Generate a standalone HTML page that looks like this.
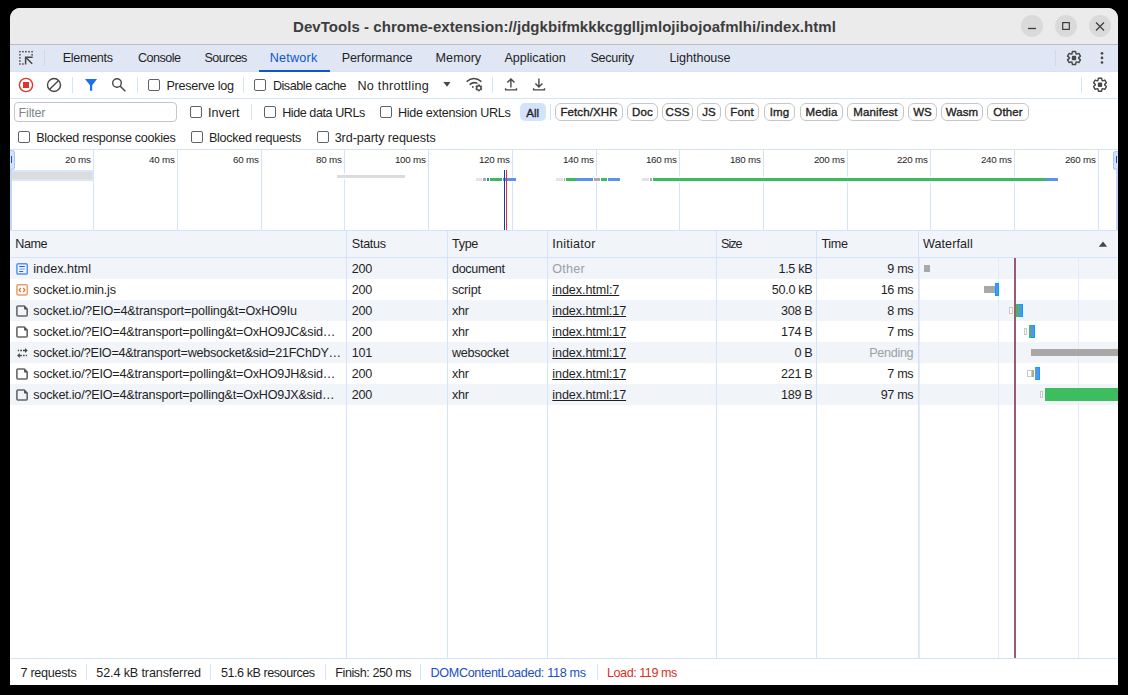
<!DOCTYPE html><html><head><meta charset="utf-8"><style>
html,body{margin:0;padding:0;background:#000;width:1128px;height:695px;overflow:hidden}
.t{position:absolute;white-space:nowrap;font-family:"Liberation Sans",sans-serif;color:#1f1f1f}
.r{position:absolute}
svg{position:absolute;overflow:visible}
#win{position:absolute;left:10px;top:8px;width:1108px;height:677px;background:#fff;border-radius:10px 10px 0 0;overflow:hidden}
</style></head><body>
<div id="win"></div>
<div class="r" style="left:10px;top:8px;width:1108px;height:36px;background:#ebebeb;border-radius:10px 10px 0 0;"></div>
<div class="r" style="left:10px;top:44px;width:1108px;height:1px;background:#bdbdbd;"></div>
<div class="t" style="left:293px;top:17.80px;font-size:15px;line-height:17px;color:#3d3d3d;font-weight:bold;letter-spacing:0.055px;">DevTools - chrome-extension://jdgkbifmkkkcgglljmlojibojoafmlhi/index.html</div>
<div class="r" style="left:1021px;top:15px;width:22px;height:22px;border-radius:11px;background:#dadada"></div>
<div class="r" style="left:1055px;top:15px;width:22px;height:22px;border-radius:11px;background:#dadada"></div>
<div class="r" style="left:1089px;top:15px;width:22px;height:22px;border-radius:11px;background:#dadada"></div>
<svg style="left:0;top:0" width="1128" height="60"><line x1="1028" y1="28.5" x2="1036" y2="28.5" stroke="#3d3d3d" stroke-width="1.3"/><rect x="1062.7" y="22.6" width="6.6" height="6.8" fill="none" stroke="#3d3d3d" stroke-width="1.2"/><path d="M1096 22.5 L1104 30.5 M1104 22.5 L1096 30.5" stroke="#3d3d3d" stroke-width="1.2"/></svg>
<div class="r" style="left:10px;top:45px;width:1108px;height:26px;background:#e0e6f4;"></div>
<div class="r" style="left:10px;top:71px;width:1108px;height:1px;background:#d3e3fd;"></div>
<div class="t" style="left:62.7px;top:50.90px;font-size:12.6px;line-height:15px;color:#1f1f1f;letter-spacing:-0.313px;">Elements</div>
<div class="t" style="left:137.9px;top:50.90px;font-size:12.6px;line-height:15px;color:#1f1f1f;letter-spacing:-0.514px;">Console</div>
<div class="t" style="left:204.5px;top:50.90px;font-size:12.6px;line-height:15px;color:#1f1f1f;letter-spacing:-0.554px;">Sources</div>
<div class="t" style="left:269.7px;top:50.90px;font-size:12.6px;line-height:15px;color:#0b57d0;letter-spacing:0.236px;">Network</div>
<div class="t" style="left:341.7px;top:50.90px;font-size:12.6px;line-height:15px;color:#1f1f1f;letter-spacing:-0.132px;">Performance</div>
<div class="t" style="left:435.6px;top:50.90px;font-size:12.6px;line-height:15px;color:#1f1f1f;letter-spacing:0.019px;">Memory</div>
<div class="t" style="left:504.5px;top:50.90px;font-size:12.6px;line-height:15px;color:#1f1f1f;letter-spacing:-0.037px;">Application</div>
<div class="t" style="left:590.4px;top:50.90px;font-size:12.6px;line-height:15px;color:#1f1f1f;letter-spacing:-0.271px;">Security</div>
<div class="t" style="left:669.4px;top:50.90px;font-size:12.6px;line-height:15px;color:#1f1f1f;letter-spacing:-0.054px;">Lighthouse</div>
<div class="r" style="left:259px;top:70px;width:71px;height:2px;background:#0b57d0;"></div>
<div class="r" style="left:44px;top:50px;width:1px;height:16px;background:#cdd9ef;"></div>
<div class="r" style="left:1055px;top:50px;width:1px;height:16px;background:#cdd9ef;"></div>
<div class="r" style="left:10px;top:98px;width:1108px;height:1px;background:#d3e3fd;"></div>
<svg style="left:0;top:0" width="1128" height="100"><circle cx="26" cy="85" r="6.6" fill="none" stroke="#dc362e" stroke-width="1.4"/><rect x="23" y="82" width="6" height="6" fill="#dc362e"/><circle cx="54" cy="85" r="6.5" fill="none" stroke="#474747" stroke-width="1.4"/><line x1="58.6" y1="80.4" x2="49.4" y2="89.6" stroke="#474747" stroke-width="1.4"/><path d="M85 79 H97 L92.2 85.3 V90.8 H90 V85.3 Z" fill="#1a6ef0"/><circle cx="117" cy="83" r="4.3" fill="none" stroke="#474747" stroke-width="1.4"/><line x1="120" y1="86" x2="125.3" y2="91.3" stroke="#474747" stroke-width="1.5"/><path d="M443.4 82 H450.5 L447 86.8 Z" fill="#474747"/><path d="M466.6 81.6 Q474 75.6 481.4 81.6" fill="none" stroke="#474747" stroke-width="1.5"/><path d="M469.6 84.6 Q474 81 478.4 84" fill="none" stroke="#474747" stroke-width="1.5"/><circle cx="472.8" cy="87" r="0.9" fill="#474747"/><circle cx="478.8" cy="87.9" r="4.6" fill="#fff"/><path d="M480.05 90.18 L479.79 91.36 L477.81 91.36 L477.55 90.18 L477.45 90.12 L476.30 90.49 L475.31 88.77 L476.20 87.96 L476.20 87.84 L475.31 87.03 L476.30 85.31 L477.45 85.68 L477.55 85.62 L477.81 84.44 L479.79 84.44 L480.05 85.62 L480.15 85.68 L481.30 85.31 L482.29 87.03 L481.40 87.84 L481.40 87.96 L482.29 88.77 L481.30 90.49 L480.15 90.12Z" fill="#474747"/><circle cx="478.8" cy="87.9" r="1.5" fill="#fff"/><path d="M510.9 87.6 V79.2 M507.3 82.6 L510.9 79 L514.5 82.6" fill="none" stroke="#474747" stroke-width="1.4"/><path d="M505.6 88.2 V89.9 H516.5 V88.2" fill="none" stroke="#474747" stroke-width="1.4" stroke-linejoin="round"/><path d="M538.9 78.5 V86.6 M535.4 83.6 L538.9 87 L542.4 83.6" fill="none" stroke="#474747" stroke-width="1.4"/><path d="M533.6 88.2 V89.9 H544.5 V88.2" fill="none" stroke="#474747" stroke-width="1.4" stroke-linejoin="round"/></svg>
<div class="r" style="left:72px;top:77px;width:1px;height:16px;background:#d3e3fd;"></div>
<div class="r" style="left:243px;top:77px;width:1px;height:16px;background:#d3e3fd;"></div>
<div class="r" style="left:492px;top:77px;width:1px;height:16px;background:#d3e3fd;"></div>
<div class="r" style="left:1081px;top:77px;width:1px;height:16px;background:#d3e3fd;"></div>
<div class="r" style="left:148px;top:79px;width:10px;height:10px;border:1.2px solid #5f6368;border-radius:2px;box-sizing:content-box"></div>
<div class="t" style="left:166.4px;top:79.00px;font-size:12.6px;line-height:15px;letter-spacing:-0.281px;">Preserve log</div>
<div class="r" style="left:254px;top:79px;width:10px;height:10px;border:1.2px solid #5f6368;border-radius:2px;box-sizing:content-box"></div>
<div class="t" style="left:272.9px;top:79.00px;font-size:12.6px;line-height:15px;letter-spacing:-0.46px;">Disable cache</div>
<div class="t" style="left:357.4px;top:79.00px;font-size:12.6px;line-height:15px;letter-spacing:0.291px;">No throttling</div>
<div class="r" style="left:14px;top:102px;width:161px;height:18px;border:1px solid #c4c7c5;border-radius:4px;box-sizing:content-box"></div>
<div class="t" style="left:18.6px;top:105.80px;font-size:12.6px;line-height:15px;color:#80868b;letter-spacing:-0.222px;">Filter</div>
<div class="r" style="left:190px;top:106px;width:10px;height:10px;border:1.2px solid #5f6368;border-radius:2px;box-sizing:content-box"></div>
<div class="t" style="left:208px;top:105.80px;font-size:12.6px;line-height:15px;">Invert</div>
<div class="r" style="left:251px;top:104px;width:1px;height:16px;background:#d3e3fd;"></div>
<div class="r" style="left:264px;top:106px;width:10px;height:10px;border:1.2px solid #5f6368;border-radius:2px;box-sizing:content-box"></div>
<div class="t" style="left:282.2px;top:105.80px;font-size:12.6px;line-height:15px;letter-spacing:-0.443px;">Hide data URLs</div>
<div class="r" style="left:380px;top:106px;width:10px;height:10px;border:1.2px solid #5f6368;border-radius:2px;box-sizing:content-box"></div>
<div class="t" style="left:397.9px;top:105.80px;font-size:12.6px;line-height:15px;letter-spacing:-0.297px;">Hide extension URLs</div>
<div class="r" style="left:520px;top:103px;width:26px;height:18px;background:#d3e3fd;border-radius:5px"></div>
<div class="t" style="left:526.3px;top:106.50px;font-size:11.5px;line-height:13px;color:#1f1f1f;-webkit-text-stroke:0.35px #1f1f1f;">All</div>
<div class="r" style="left:550px;top:104px;width:1px;height:16px;background:#d3e3fd;"></div>
<div class="r" style="left:555px;top:103px;width:66px;height:16px;border:1px solid #c4c7c5;border-radius:6px;box-sizing:content-box"></div>
<div class="t" style="left:555px;top:103px;width:68px;height:18px;line-height:18px;text-align:center;font-size:11.5px;-webkit-text-stroke:0.35px #1f1f1f;letter-spacing:0.1px">Fetch/XHR</div>
<div class="r" style="left:627px;top:103px;width:29px;height:16px;border:1px solid #c4c7c5;border-radius:6px;box-sizing:content-box"></div>
<div class="t" style="left:627px;top:103px;width:31px;height:18px;line-height:18px;text-align:center;font-size:11.5px;-webkit-text-stroke:0.35px #1f1f1f;letter-spacing:0.1px">Doc</div>
<div class="r" style="left:662px;top:103px;width:29px;height:16px;border:1px solid #c4c7c5;border-radius:6px;box-sizing:content-box"></div>
<div class="t" style="left:662px;top:103px;width:31px;height:18px;line-height:18px;text-align:center;font-size:11.5px;-webkit-text-stroke:0.35px #1f1f1f;letter-spacing:0.1px">CSS</div>
<div class="r" style="left:697px;top:103px;width:22px;height:16px;border:1px solid #c4c7c5;border-radius:6px;box-sizing:content-box"></div>
<div class="t" style="left:697px;top:103px;width:24px;height:18px;line-height:18px;text-align:center;font-size:11.5px;-webkit-text-stroke:0.35px #1f1f1f;letter-spacing:0.1px">JS</div>
<div class="r" style="left:725px;top:103px;width:32px;height:16px;border:1px solid #c4c7c5;border-radius:6px;box-sizing:content-box"></div>
<div class="t" style="left:725px;top:103px;width:34px;height:18px;line-height:18px;text-align:center;font-size:11.5px;-webkit-text-stroke:0.35px #1f1f1f;letter-spacing:0.1px">Font</div>
<div class="r" style="left:764px;top:103px;width:29px;height:16px;border:1px solid #c4c7c5;border-radius:6px;box-sizing:content-box"></div>
<div class="t" style="left:764px;top:103px;width:31px;height:18px;line-height:18px;text-align:center;font-size:11.5px;-webkit-text-stroke:0.35px #1f1f1f;letter-spacing:0.1px">Img</div>
<div class="r" style="left:800px;top:103px;width:41px;height:16px;border:1px solid #c4c7c5;border-radius:6px;box-sizing:content-box"></div>
<div class="t" style="left:800px;top:103px;width:43px;height:18px;line-height:18px;text-align:center;font-size:11.5px;-webkit-text-stroke:0.35px #1f1f1f;letter-spacing:0.1px">Media</div>
<div class="r" style="left:847px;top:103px;width:55px;height:16px;border:1px solid #c4c7c5;border-radius:6px;box-sizing:content-box"></div>
<div class="t" style="left:847px;top:103px;width:57px;height:18px;line-height:18px;text-align:center;font-size:11.5px;-webkit-text-stroke:0.35px #1f1f1f;letter-spacing:0.1px">Manifest</div>
<div class="r" style="left:908px;top:103px;width:27px;height:16px;border:1px solid #c4c7c5;border-radius:6px;box-sizing:content-box"></div>
<div class="t" style="left:908px;top:103px;width:29px;height:18px;line-height:18px;text-align:center;font-size:11.5px;-webkit-text-stroke:0.35px #1f1f1f;letter-spacing:0.1px">WS</div>
<div class="r" style="left:941px;top:103px;width:40px;height:16px;border:1px solid #c4c7c5;border-radius:6px;box-sizing:content-box"></div>
<div class="t" style="left:941px;top:103px;width:42px;height:18px;line-height:18px;text-align:center;font-size:11.5px;-webkit-text-stroke:0.35px #1f1f1f;letter-spacing:0.1px">Wasm</div>
<div class="r" style="left:987px;top:103px;width:40px;height:16px;border:1px solid #c4c7c5;border-radius:6px;box-sizing:content-box"></div>
<div class="t" style="left:987px;top:103px;width:42px;height:18px;line-height:18px;text-align:center;font-size:11.5px;-webkit-text-stroke:0.35px #1f1f1f;letter-spacing:0.1px">Other</div>
<div class="r" style="left:18px;top:131px;width:10px;height:10px;border:1.2px solid #5f6368;border-radius:2px;box-sizing:content-box"></div>
<div class="t" style="left:36.2px;top:130.60px;font-size:12.6px;line-height:15px;letter-spacing:-0.29px;">Blocked response cookies</div>
<div class="r" style="left:191px;top:131px;width:10px;height:10px;border:1.2px solid #5f6368;border-radius:2px;box-sizing:content-box"></div>
<div class="t" style="left:209px;top:130.60px;font-size:12.6px;line-height:15px;letter-spacing:-0.288px;">Blocked requests</div>
<div class="r" style="left:317px;top:131px;width:10px;height:10px;border:1.2px solid #5f6368;border-radius:2px;box-sizing:content-box"></div>
<div class="t" style="left:334.7px;top:130.60px;font-size:12.6px;line-height:15px;letter-spacing:-0.071px;">3rd-party requests</div>
<div class="r" style="left:10px;top:149px;width:1108px;height:1px;background:#d3e3fd;"></div>
<div class="r" style="left:10px;top:230px;width:1108px;height:1px;background:#d3e3fd;"></div>
<div class="r" style="left:93px;top:150px;width:1px;height:80px;background:#d3e3fd;"></div>
<div class="t" style="right:1037.1px;top:154.00px;font-size:9.8px;line-height:11px;letter-spacing:-0.22px;margin-right:0.22px;color:#1f1f1f;">20 ms</div>
<div class="r" style="left:177px;top:150px;width:1px;height:80px;background:#d3e3fd;"></div>
<div class="t" style="right:953.1px;top:154.00px;font-size:9.8px;line-height:11px;letter-spacing:-0.22px;margin-right:0.22px;color:#1f1f1f;">40 ms</div>
<div class="r" style="left:261px;top:150px;width:1px;height:80px;background:#d3e3fd;"></div>
<div class="t" style="right:869.1px;top:154.00px;font-size:9.8px;line-height:11px;letter-spacing:-0.22px;margin-right:0.22px;color:#1f1f1f;">60 ms</div>
<div class="r" style="left:344px;top:150px;width:1px;height:80px;background:#d3e3fd;"></div>
<div class="t" style="right:786.1px;top:154.00px;font-size:9.8px;line-height:11px;letter-spacing:-0.22px;margin-right:0.22px;color:#1f1f1f;">80 ms</div>
<div class="r" style="left:428px;top:150px;width:1px;height:80px;background:#d3e3fd;"></div>
<div class="t" style="right:702.1px;top:154.00px;font-size:9.8px;line-height:11px;letter-spacing:-0.22px;margin-right:0.22px;color:#1f1f1f;">100 ms</div>
<div class="r" style="left:512px;top:150px;width:1px;height:80px;background:#d3e3fd;"></div>
<div class="t" style="right:618.1px;top:154.00px;font-size:9.8px;line-height:11px;letter-spacing:-0.22px;margin-right:0.22px;color:#1f1f1f;">120 ms</div>
<div class="r" style="left:596px;top:150px;width:1px;height:80px;background:#d3e3fd;"></div>
<div class="t" style="right:534.1px;top:154.00px;font-size:9.8px;line-height:11px;letter-spacing:-0.22px;margin-right:0.22px;color:#1f1f1f;">140 ms</div>
<div class="r" style="left:679px;top:150px;width:1px;height:80px;background:#d3e3fd;"></div>
<div class="t" style="right:451.1px;top:154.00px;font-size:9.8px;line-height:11px;letter-spacing:-0.22px;margin-right:0.22px;color:#1f1f1f;">160 ms</div>
<div class="r" style="left:763px;top:150px;width:1px;height:80px;background:#d3e3fd;"></div>
<div class="t" style="right:367.1px;top:154.00px;font-size:9.8px;line-height:11px;letter-spacing:-0.22px;margin-right:0.22px;color:#1f1f1f;">180 ms</div>
<div class="r" style="left:847px;top:150px;width:1px;height:80px;background:#d3e3fd;"></div>
<div class="t" style="right:283.1px;top:154.00px;font-size:9.8px;line-height:11px;letter-spacing:-0.22px;margin-right:0.22px;color:#1f1f1f;">200 ms</div>
<div class="r" style="left:930px;top:150px;width:1px;height:80px;background:#d3e3fd;"></div>
<div class="t" style="right:200.10000000000002px;top:154.00px;font-size:9.8px;line-height:11px;letter-spacing:-0.22px;margin-right:0.22px;color:#1f1f1f;">220 ms</div>
<div class="r" style="left:1014px;top:150px;width:1px;height:80px;background:#d3e3fd;"></div>
<div class="t" style="right:116.10000000000002px;top:154.00px;font-size:9.8px;line-height:11px;letter-spacing:-0.22px;margin-right:0.22px;color:#1f1f1f;">240 ms</div>
<div class="r" style="left:1098px;top:150px;width:1px;height:80px;background:#d3e3fd;"></div>
<div class="t" style="right:32.09999999999991px;top:154.00px;font-size:9.8px;line-height:11px;letter-spacing:-0.22px;margin-right:0.22px;color:#1f1f1f;">260 ms</div>
<div class="r" style="left:10px;top:231px;width:1108px;height:26px;background:#f1f4f9;"></div>
<div class="r" style="left:10px;top:257px;width:1108px;height:1px;background:#d3e3fd;"></div>
<div class="r" style="left:10px;top:258px;width:1108px;height:21px;background:#f1f4f9;"></div>
<div class="r" style="left:10px;top:300px;width:1108px;height:21px;background:#f1f4f9;"></div>
<div class="r" style="left:10px;top:342px;width:1108px;height:21px;background:#f1f4f9;"></div>
<div class="r" style="left:10px;top:384px;width:1108px;height:21px;background:#f1f4f9;"></div>
<div class="r" style="left:346px;top:231px;width:1px;height:427px;background:#d3e3fd;"></div>
<div class="r" style="left:447px;top:231px;width:1px;height:427px;background:#d3e3fd;"></div>
<div class="r" style="left:547px;top:231px;width:1px;height:427px;background:#d3e3fd;"></div>
<div class="r" style="left:716px;top:231px;width:1px;height:427px;background:#d3e3fd;"></div>
<div class="r" style="left:816px;top:231px;width:1px;height:427px;background:#d3e3fd;"></div>
<div class="r" style="left:918px;top:231px;width:1px;height:427px;background:#d3e3fd;"></div>
<div class="r" style="left:998px;top:258px;width:1px;height:400px;background:#e3ebfa;"></div>
<div class="r" style="left:1078px;top:258px;width:1px;height:400px;background:#e3ebfa;"></div>
<div class="r" style="left:919px;top:258px;width:1px;height:400px;background:#e6ebf3;"></div>
<div class="t" style="left:15.2px;top:236.70px;font-size:12.6px;line-height:15px;letter-spacing:-0.4px;">Name</div>
<div class="t" style="left:351.8px;top:236.70px;font-size:12.6px;line-height:15px;letter-spacing:-0.284px;">Status</div>
<div class="t" style="left:452px;top:236.70px;font-size:12.6px;line-height:15px;letter-spacing:-0.325px;">Type</div>
<div class="t" style="left:552.3px;top:236.70px;font-size:12.6px;line-height:15px;letter-spacing:0.231px;">Initiator</div>
<div class="t" style="left:721px;top:236.70px;font-size:12.6px;line-height:15px;letter-spacing:-0.992px;">Size</div>
<div class="t" style="left:821.4px;top:236.70px;font-size:12.6px;line-height:15px;letter-spacing:-0.328px;">Time</div>
<div class="t" style="left:923px;top:236.70px;font-size:12.6px;line-height:15px;letter-spacing:0.059px;">Waterfall</div>
<div class="t" style="left:33.3px;top:261.80px;font-size:12.6px;line-height:15px;letter-spacing:0.027px;">index.html</div>
<div class="t" style="left:351.8px;top:261.80px;font-size:12.6px;line-height:15px;letter-spacing:-0.334px;">200</div>
<div class="t" style="left:452px;top:261.80px;font-size:12.6px;line-height:15px;letter-spacing:-0.329px;">document</div>
<div class="t" style="left:552.3px;top:261.80px;font-size:12.6px;line-height:15px;color:#9aa0a6;letter-spacing:0.2px;">Other</div>
<div class="t" style="right:315.29999999999995px;top:261.80px;font-size:12.6px;line-height:15px;letter-spacing:-0.284px;margin-right:0.284px;">1.5 kB</div>
<div class="t" style="right:214.39999999999998px;top:261.80px;font-size:12.6px;line-height:15px;letter-spacing:-0.325px;margin-right:0.325px;color:#1f1f1f;">9 ms</div>
<div class="t" style="left:33.3px;top:282.80px;font-size:12.6px;line-height:15px;letter-spacing:-0.226px;">socket.io.min.js</div>
<div class="t" style="left:351.8px;top:282.80px;font-size:12.6px;line-height:15px;letter-spacing:-0.334px;">200</div>
<div class="t" style="left:452px;top:282.80px;font-size:12.6px;line-height:15px;letter-spacing:-0.239px;">script</div>
<div class="t" style="left:552.3px;top:282.80px;font-size:12.6px;line-height:15px;letter-spacing:-0.08px;text-decoration:underline;">index.html:7</div>
<div class="t" style="right:315.29999999999995px;top:282.80px;font-size:12.6px;line-height:15px;letter-spacing:-0.291px;margin-right:0.291px;">50.0 kB</div>
<div class="t" style="right:214.39999999999998px;top:282.80px;font-size:12.6px;line-height:15px;letter-spacing:-0.327px;margin-right:0.327px;color:#1f1f1f;">16 ms</div>
<div class="t" style="left:33.3px;top:303.80px;font-size:12.6px;line-height:15px;letter-spacing:-0.142px;">socket.io/?EIO=4&amp;transport=polling&amp;t=OxHO9Iu</div>
<div class="t" style="left:351.8px;top:303.80px;font-size:12.6px;line-height:15px;letter-spacing:-0.334px;">200</div>
<div class="t" style="left:452px;top:303.80px;font-size:12.6px;line-height:15px;letter-spacing:-0.278px;">xhr</div>
<div class="t" style="left:552.3px;top:303.80px;font-size:12.6px;line-height:15px;letter-spacing:-0.085px;text-decoration:underline;">index.html:17</div>
<div class="t" style="right:315.29999999999995px;top:303.80px;font-size:12.6px;line-height:15px;letter-spacing:-0.314px;margin-right:0.314px;">308 B</div>
<div class="t" style="right:214.39999999999998px;top:303.80px;font-size:12.6px;line-height:15px;letter-spacing:-0.325px;margin-right:0.325px;color:#1f1f1f;">8 ms</div>
<div class="t" style="left:33.3px;top:324.80px;font-size:12.6px;line-height:15px;letter-spacing:-0.203px;">socket.io/?EIO=4&amp;transport=polling&amp;t=OxHO9JC&amp;sid…</div>
<div class="t" style="left:351.8px;top:324.80px;font-size:12.6px;line-height:15px;letter-spacing:-0.334px;">200</div>
<div class="t" style="left:452px;top:324.80px;font-size:12.6px;line-height:15px;letter-spacing:-0.278px;">xhr</div>
<div class="t" style="left:552.3px;top:324.80px;font-size:12.6px;line-height:15px;letter-spacing:-0.085px;text-decoration:underline;">index.html:17</div>
<div class="t" style="right:315.29999999999995px;top:324.80px;font-size:12.6px;line-height:15px;letter-spacing:-0.314px;margin-right:0.314px;">174 B</div>
<div class="t" style="right:214.39999999999998px;top:324.80px;font-size:12.6px;line-height:15px;letter-spacing:-0.325px;margin-right:0.325px;color:#1f1f1f;">7 ms</div>
<div class="t" style="left:33.3px;top:345.80px;font-size:12.6px;line-height:15px;letter-spacing:-0.272px;">socket.io/?EIO=4&amp;transport=websocket&amp;sid=21FChDY…</div>
<div class="t" style="left:351.8px;top:345.80px;font-size:12.6px;line-height:15px;letter-spacing:-0.334px;">101</div>
<div class="t" style="left:452px;top:345.80px;font-size:12.6px;line-height:15px;letter-spacing:-0.315px;">websocket</div>
<div class="t" style="left:552.3px;top:345.80px;font-size:12.6px;line-height:15px;letter-spacing:-0.085px;text-decoration:underline;">index.html:17</div>
<div class="t" style="right:315.29999999999995px;top:345.80px;font-size:12.6px;line-height:15px;letter-spacing:-0.3px;margin-right:0.3px;">0 B</div>
<div class="t" style="right:214.39999999999998px;top:345.80px;font-size:12.6px;line-height:15px;letter-spacing:-0.315px;margin-right:0.315px;color:#9aa0a6;">Pending</div>
<div class="t" style="left:33.3px;top:366.80px;font-size:12.6px;line-height:15px;letter-spacing:-0.203px;">socket.io/?EIO=4&amp;transport=polling&amp;t=OxHO9JH&amp;sid…</div>
<div class="t" style="left:351.8px;top:366.80px;font-size:12.6px;line-height:15px;letter-spacing:-0.334px;">200</div>
<div class="t" style="left:452px;top:366.80px;font-size:12.6px;line-height:15px;letter-spacing:-0.278px;">xhr</div>
<div class="t" style="left:552.3px;top:366.80px;font-size:12.6px;line-height:15px;letter-spacing:-0.085px;text-decoration:underline;">index.html:17</div>
<div class="t" style="right:315.29999999999995px;top:366.80px;font-size:12.6px;line-height:15px;letter-spacing:-0.314px;margin-right:0.314px;">221 B</div>
<div class="t" style="right:214.39999999999998px;top:366.80px;font-size:12.6px;line-height:15px;letter-spacing:-0.325px;margin-right:0.325px;color:#1f1f1f;">7 ms</div>
<div class="t" style="left:33.3px;top:387.80px;font-size:12.6px;line-height:15px;letter-spacing:-0.203px;">socket.io/?EIO=4&amp;transport=polling&amp;t=OxHO9JX&amp;sid…</div>
<div class="t" style="left:351.8px;top:387.80px;font-size:12.6px;line-height:15px;letter-spacing:-0.334px;">200</div>
<div class="t" style="left:452px;top:387.80px;font-size:12.6px;line-height:15px;letter-spacing:-0.278px;">xhr</div>
<div class="t" style="left:552.3px;top:387.80px;font-size:12.6px;line-height:15px;letter-spacing:-0.085px;text-decoration:underline;">index.html:17</div>
<div class="t" style="right:315.29999999999995px;top:387.80px;font-size:12.6px;line-height:15px;letter-spacing:-0.314px;margin-right:0.314px;">189 B</div>
<div class="t" style="right:214.39999999999998px;top:387.80px;font-size:12.6px;line-height:15px;letter-spacing:-0.327px;margin-right:0.327px;color:#1f1f1f;">97 ms</div>
<div class="r" style="left:10px;top:658px;width:1108px;height:1px;background:#d3e3fd;"></div>
<div class="t" style="left:20.5px;top:666.30px;font-size:12.6px;line-height:15px;color:#1f1f1f;letter-spacing:-0.28px;">7 requests</div>
<div class="t" style="left:96.3px;top:666.30px;font-size:12.6px;line-height:15px;color:#1f1f1f;letter-spacing:-0.129px;">52.4 kB transferred</div>
<div class="t" style="left:220.9px;top:666.30px;font-size:12.6px;line-height:15px;color:#1f1f1f;letter-spacing:-0.454px;">51.6 kB resources</div>
<div class="t" style="left:335.3px;top:666.30px;font-size:12.6px;line-height:15px;color:#1f1f1f;letter-spacing:-0.429px;">Finish: 250 ms</div>
<div class="t" style="left:430.5px;top:666.30px;font-size:12.6px;line-height:15px;color:#1a4fc5;letter-spacing:-0.323px;">DOMContentLoaded: 118 ms</div>
<div class="t" style="left:607px;top:666.30px;font-size:12.6px;line-height:15px;color:#d93025;letter-spacing:-0.459px;">Load: 119 ms</div>
<div class="r" style="left:86px;top:664px;width:1px;height:16px;background:#d3e3fd;"></div>
<div class="r" style="left:210px;top:664px;width:1px;height:16px;background:#d3e3fd;"></div>
<div class="r" style="left:325px;top:664px;width:1px;height:16px;background:#d3e3fd;"></div>
<div class="r" style="left:420px;top:664px;width:1px;height:16px;background:#d3e3fd;"></div>
<div class="r" style="left:597px;top:664px;width:1px;height:16px;background:#d3e3fd;"></div>
<svg style="left:0;top:0" width="1128" height="100"><rect x="19.15" y="50.95" width="1.5" height="1.5" fill="#474747"/><rect x="22.15" y="50.95" width="1.5" height="1.5" fill="#474747"/><rect x="25.15" y="50.95" width="1.5" height="1.5" fill="#474747"/><rect x="28.25" y="50.95" width="1.5" height="1.5" fill="#474747"/><rect x="31.35" y="50.95" width="1.5" height="1.5" fill="#474747"/><rect x="19.15" y="54.05" width="1.5" height="1.5" fill="#474747"/><rect x="19.15" y="57.15" width="1.5" height="1.5" fill="#474747"/><rect x="19.15" y="60.25" width="1.5" height="1.5" fill="#474747"/><rect x="19.15" y="63.25" width="1.5" height="1.5" fill="#474747"/><rect x="22.15" y="63.25" width="1.5" height="1.5" fill="#474747"/><rect x="31.35" y="54.05" width="1.5" height="1.5" fill="#474747"/><path d="M25.6 64.6 V57.2 H32.7 M25.9 57.5 L32.2 63.8" fill="none" stroke="#474747" stroke-width="1.5"/><path d="M1076.04 62.23 L1075.59 64.51 L1072.41 64.51 L1071.96 62.23 L1071.36 61.89 L1069.16 62.63 L1067.57 59.87 L1069.31 58.35 L1069.31 57.65 L1067.57 56.13 L1069.16 53.37 L1071.36 54.11 L1071.96 53.77 L1072.41 51.49 L1075.59 51.49 L1076.04 53.77 L1076.64 54.11 L1078.84 53.37 L1080.43 56.13 L1078.69 57.65 L1078.69 58.35 L1080.43 59.87 L1078.84 62.63 L1076.64 61.89Z" fill="none" stroke="#474747" stroke-width="1.4" stroke-linejoin="round"/><rect x="1071.8" y="55.8" width="4.4" height="4.4" rx="1.2" fill="#474747"/><path d="M1102.04 88.93 L1101.59 91.21 L1098.41 91.21 L1097.96 88.93 L1097.36 88.59 L1095.16 89.33 L1093.57 86.57 L1095.31 85.05 L1095.31 84.35 L1093.57 82.83 L1095.16 80.07 L1097.36 80.81 L1097.96 80.47 L1098.41 78.19 L1101.59 78.19 L1102.04 80.47 L1102.64 80.81 L1104.84 80.07 L1106.43 82.83 L1104.69 84.35 L1104.69 85.05 L1106.43 86.57 L1104.84 89.33 L1102.64 88.59Z" fill="none" stroke="#474747" stroke-width="1.4" stroke-linejoin="round"/><rect x="1097.8" y="82.5" width="4.4" height="4.4" rx="1.2" fill="#474747"/><circle cx="1102" cy="53.3" r="1.35" fill="#474747"/><circle cx="1102" cy="57.9" r="1.35" fill="#474747"/><circle cx="1102" cy="62.5" r="1.35" fill="#474747"/></svg>
<div class="r" style="left:137px;top:77px;width:1px;height:16px;background:#d3e3fd;"></div>
<svg style="left:0;top:0" width="1128" height="260"><path d="M1103 241.4 L1107.2 246.7 H1098.8 Z" fill="#474747"/></svg>
<div class="r" style="left:10px;top:150px;width:3.5px;height:17.5px;background:#d3e3fd;border:1px solid #a8c7fa;border-left:none;border-radius:0 3px 3px 0"></div>
<div class="r" style="left:11px;top:156px;width:1.2px;height:7px;background:#0b57d0;"></div>
<div class="r" style="left:1113px;top:151px;width:4px;height:17px;background:#d3e3fd;border:1px solid #a8c7fa;border-right:none;border-radius:3px 0 0 3px"></div>
<div class="r" style="left:1116px;top:156px;width:1.2px;height:7px;background:#0b57d0;"></div>
<div class="r" style="left:10px;top:168px;width:1.5px;height:62px;background:#c2d6f8;"></div>
<div class="r" style="left:1116.3px;top:168px;width:1.7px;height:62px;background:#c2d6f8;"></div>
<div class="r" style="left:12px;top:170px;width:81px;height:11px;background:#d9e6fb;"></div>
<div class="r" style="left:12px;top:172px;width:80px;height:7px;background:#dcdcdc;"></div>
<div class="r" style="left:337px;top:175px;width:68px;height:2.6px;background:#dcdcdc;box-shadow:0 1.4px 0 #fff,0 -1.4px 0 #fff"></div>
<div class="r" style="left:475.9px;top:178.2px;width:6.600000000000023px;height:2.6px;background:#e3e3e3;box-shadow:0 1.4px 0 #fff,0 -1.4px 0 #fff"></div>
<div class="r" style="left:482.5px;top:178.2px;width:3.5px;height:2.6px;background:#a9a9a9;box-shadow:0 1.4px 0 #fff,0 -1.4px 0 #fff"></div>
<div class="r" style="left:486.9px;top:178.2px;width:2.400000000000034px;height:2.6px;background:#2e8aa0;box-shadow:0 1.4px 0 #fff,0 -1.4px 0 #fff"></div>
<div class="r" style="left:490.1px;top:178.2px;width:11.899999999999977px;height:2.6px;background:#3bbb5e;box-shadow:0 1.4px 0 #fff,0 -1.4px 0 #fff"></div>
<div class="r" style="left:502.7px;top:178.2px;width:13.150000000000034px;height:2.6px;background:#5a92f2;box-shadow:0 1.4px 0 #fff,0 -1.4px 0 #fff"></div>
<div class="r" style="left:556px;top:178.2px;width:7.100000000000023px;height:2.6px;background:#e3e3e3;box-shadow:0 1.4px 0 #fff,0 -1.4px 0 #fff"></div>
<div class="r" style="left:563.8px;top:178.2px;width:1.2000000000000455px;height:2.6px;background:#a9a9a9;box-shadow:0 1.4px 0 #fff,0 -1.4px 0 #fff"></div>
<div class="r" style="left:566.3px;top:178.2px;width:10.300000000000068px;height:2.6px;background:#3bbb5e;box-shadow:0 1.4px 0 #fff,0 -1.4px 0 #fff"></div>
<div class="r" style="left:576.6px;top:178.2px;width:16.299999999999955px;height:2.6px;background:#5a92f2;box-shadow:0 1.4px 0 #fff,0 -1.4px 0 #fff"></div>
<div class="r" style="left:593.8px;top:178.2px;width:6.2000000000000455px;height:2.6px;background:#a9a9a9;box-shadow:0 1.4px 0 #fff,0 -1.4px 0 #fff"></div>
<div class="r" style="left:601.2px;top:178.2px;width:5.899999999999977px;height:2.6px;background:#3bbb5e;box-shadow:0 1.4px 0 #fff,0 -1.4px 0 #fff"></div>
<div class="r" style="left:607.8px;top:178.2px;width:12.300000000000068px;height:2.6px;background:#5a92f2;box-shadow:0 1.4px 0 #fff,0 -1.4px 0 #fff"></div>
<div class="r" style="left:642px;top:178.2px;width:7px;height:2.6px;background:#e3e3e3;box-shadow:0 1.4px 0 #fff,0 -1.4px 0 #fff"></div>
<div class="r" style="left:649.9px;top:178.2px;width:2.1000000000000227px;height:2.6px;background:#a9a9a9;box-shadow:0 1.4px 0 #fff,0 -1.4px 0 #fff"></div>
<div class="r" style="left:652.8px;top:178.2px;width:393.60000000000014px;height:2.6px;background:#3bbb5e;box-shadow:0 1.4px 0 #fff,0 -1.4px 0 #fff"></div>
<div class="r" style="left:1046.4px;top:178.2px;width:11.599999999999909px;height:2.6px;background:#5a92f2;box-shadow:0 1.4px 0 #fff,0 -1.4px 0 #fff"></div>
<div class="r" style="left:504px;top:170px;width:1.2px;height:60px;background:#0b3fae;"></div>
<div class="r" style="left:506px;top:170px;width:1.1px;height:60px;background:#e0352b;"></div>
<svg style="left:0;top:0" width="1128" height="420"><rect x="16.9" y="263.7" width="10.4" height="10.4" rx="1.2" fill="none" stroke="#5592f5" stroke-width="1.5"/><path d="M19.2 266.5 H24.8 M19.2 271.5 H23.2" stroke="#1a62e8" stroke-width="1.1"/><path d="M19.2 269 H24.8" stroke="#7fa9f4" stroke-width="1.2"/><rect x="16.9" y="284.7" width="10.4" height="10.4" rx="1.4" fill="none" stroke="#ee9b6b" stroke-width="1.5"/><path d="M20.8 288 L19.1 290 L20.8 292 M23.2 288 L24.9 290 L23.2 292" fill="none" stroke="#e8722a" stroke-width="1.2"/><path d="M17.9 306.05 H24.3 L27.2 308.95 V315.05 Q27.2 316.05 26.2 316.05 H17.9 Q16.9 316.05 16.9 315.05 V307.05 Q16.9 306.05 17.9 306.05 Z" fill="none" stroke="#666" stroke-width="1.6" stroke-linejoin="round"/><path d="M24.2 306.05 V309.45 H27.4 Z" fill="#444"/><path d="M17.9 327.05 H24.3 L27.2 329.95 V336.05 Q27.2 337.05 26.2 337.05 H17.9 Q16.9 337.05 16.9 336.05 V328.05 Q16.9 327.05 17.9 327.05 Z" fill="none" stroke="#666" stroke-width="1.6" stroke-linejoin="round"/><path d="M24.2 327.05 V330.45 H27.4 Z" fill="#444"/><path d="M17.9 369.05 H24.3 L27.2 371.95 V378.05 Q27.2 379.05 26.2 379.05 H17.9 Q16.9 379.05 16.9 378.05 V370.05 Q16.9 369.05 17.9 369.05 Z" fill="none" stroke="#666" stroke-width="1.6" stroke-linejoin="round"/><path d="M24.2 369.05 V372.45 H27.4 Z" fill="#444"/><path d="M17.9 390.05 H24.3 L27.2 392.95 V399.05 Q27.2 400.05 26.2 400.05 H17.9 Q16.9 400.05 16.9 399.05 V391.05 Q16.9 390.05 17.9 390.05 Z" fill="none" stroke="#666" stroke-width="1.6" stroke-linejoin="round"/><path d="M24.2 390.05 V393.45 H27.4 Z" fill="#444"/><path d="M17.8 350.5 H19 M20.2 350.5 H22 M23 350.5 H25.5" fill="none" stroke="#474747" stroke-width="1.3"/><path d="M25 348 L27.7 350.5 L25 353 Z" fill="#474747"/><path d="M19.5 355.5 H21.9 M23 355.5 H24.6 M25.8 355.5 H27" fill="none" stroke="#474747" stroke-width="1.3"/><path d="M19.8 353 L17.1 355.5 L19.8 358 Z" fill="#474747"/></svg>
<div class="r" style="left:924px;top:265px;width:6px;height:7px;background:#a8a8a8;box-sizing:border-box;"></div>
<div class="r" style="left:984px;top:286px;width:11px;height:7px;background:#a8a8a8;box-sizing:border-box;"></div>
<div class="r" style="left:995px;top:283px;width:4px;height:13px;background:#5b8ff5;box-sizing:border-box;border:1px solid #00a3ff;"></div>
<div class="r" style="left:1009px;top:307.0px;width:4px;height:7.0px;background:#fff;box-sizing:border-box;border:1px solid #c8c8c8;"></div>
<div class="r" style="left:1016px;top:304px;width:3px;height:13px;background:#3dbd5d;box-sizing:border-box;"></div>
<div class="r" style="left:1019px;top:304px;width:4px;height:13px;background:#5b8ff5;box-sizing:border-box;border:1px solid #00a3ff;border-left:none;"></div>
<div class="r" style="left:1024px;top:328.0px;width:3px;height:7.0px;background:#fff;box-sizing:border-box;border:1px solid #c8c8c8;"></div>
<div class="r" style="left:1029px;top:325px;width:2px;height:13px;background:#3dbd5d;box-sizing:border-box;"></div>
<div class="r" style="left:1031px;top:325px;width:4px;height:13px;background:#5b8ff5;box-sizing:border-box;border:1px solid #00a3ff;border-left:none;"></div>
<div class="r" style="left:1031px;top:349px;width:87px;height:7px;background:#a8a8a8;box-sizing:border-box;"></div>
<div class="r" style="left:1027px;top:370.0px;width:4.599999999999909px;height:7.0px;background:#fff;box-sizing:border-box;border:1px solid #c8c8c8;"></div>
<div class="r" style="left:1031.6px;top:370px;width:2.400000000000091px;height:7px;background:#a8a8a8;box-sizing:border-box;"></div>
<div class="r" style="left:1035px;top:367px;width:1px;height:13px;background:#3dbd5d;box-sizing:border-box;"></div>
<div class="r" style="left:1036px;top:367px;width:4px;height:13px;background:#5b8ff5;box-sizing:border-box;border:1px solid #00a3ff;border-left:none;"></div>
<div class="r" style="left:1040px;top:391.0px;width:3px;height:7.0px;background:#fff;box-sizing:border-box;border:1px solid #c8c8c8;"></div>
<div class="r" style="left:1045px;top:388px;width:73px;height:13px;background:#3dbd5d;box-sizing:border-box;"></div>
<div class="r" style="left:1014px;top:258px;width:2px;height:400px;background:#9a5a74;"></div>
</body></html>
